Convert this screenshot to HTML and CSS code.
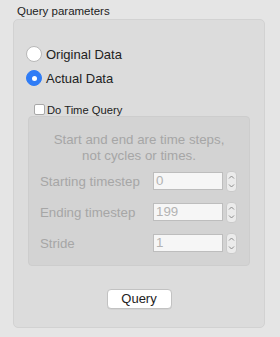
FILE: index.html
```html
<!DOCTYPE html>
<html>
<head>
<meta charset="utf-8">
<link rel="stylesheet" href="styles.css">
</head>
<body>
<div class="title">Query parameters</div>
<div class="group">
  <div class="radio-row first"><span class="radio"></span><span class="rlabel">Original Data</span></div>
  <div class="radio-row second"><span class="radio on"></span><span class="rlabel">Actual Data</span></div>
  <div class="check-row"><span class="check"></span><span class="clabel">Do Time Query</span></div>
  <div class="inner">
    <div class="desc">Start and end are time steps,<br>not cycles or times.</div>
    <div class="row"><span class="label">Starting timestep</span><span class="input">0</span><span class="stepper"><svg width="11" height="21" viewBox="0 0 11 21"><path d="M3 7.5 L5.5 5 L8 7.5 M3 13.5 L5.5 16 L8 13.5" fill="none" stroke="#8a8a8a" stroke-width="1"/></svg></span></div>
    <div class="row"><span class="label">Ending timestep</span><span class="input">199</span><span class="stepper"><svg width="11" height="21" viewBox="0 0 11 21"><path d="M3 7.5 L5.5 5 L8 7.5 M3 13.5 L5.5 16 L8 13.5" fill="none" stroke="#8a8a8a" stroke-width="1"/></svg></span></div>
    <div class="row"><span class="label">Stride</span><span class="input">1</span><span class="stepper"><svg width="11" height="21" viewBox="0 0 11 21"><path d="M3 7.5 L5.5 5 L8 7.5 M3 13.5 L5.5 16 L8 13.5" fill="none" stroke="#8a8a8a" stroke-width="1"/></svg></span></div>
  </div>
  <div class="btn-row"><span class="button">Query</span></div>
</div>
</body>
</html>
```

FILE: styles.css
```css
html, body {
  margin: 0;
  padding: 0;
  background: #e5e5e5;
  font-family: "Liberation Sans", Arial, sans-serif;
  color: #222;
  width: 280px;
  height: 337px;
  overflow: hidden;
}
.title {
  font-size: 11.5px;
  line-height: 14px;
  padding: 4px 0 0 17px;
  height: 15px;
}
.group {
  box-sizing: border-box;
  margin-left: 13px;
  width: 252px;
  height: 309px;
  background: #dcdcdc;
  border: 1px solid #d2d2d2;
  border-radius: 5px;
  padding-top: 26px;
}
.radio-row {
  display: flex;
  align-items: center;
  height: 16px;
  margin-left: 12px;
}
.radio-row.second { margin-top: 8px; }
.radio {
  box-sizing: border-box;
  width: 16px;
  height: 16px;
  border-radius: 50%;
  background: #fff;
  border: 1px solid #b8b8b8;
  position: relative;
  flex: none;
}
.radio.on {
  background: #2f7cf6;
  border-color: #2f7cf6;
}
.radio.on::after {
  content: "";
  position: absolute;
  left: 4.5px;
  top: 4.5px;
  width: 5px;
  height: 5px;
  border-radius: 50%;
  background: #fff;
}
.rlabel {
  font-size: 13px;
  margin-left: 4px;
}
.check-row {
  display: flex;
  align-items: center;
  height: 13px;
  margin-top: 17px;
  margin-left: 20px;
}
.check {
  box-sizing: border-box;
  width: 11px;
  height: 11px;
  background: #fff;
  border: 1px solid #a8a8a8;
  border-radius: 2px;
  flex: none;
}
.clabel {
  font-size: 11.2px;
  margin-left: 2px;
}
.inner {
  box-sizing: border-box;
  margin-left: 14px;
  width: 222px;
  height: 150px;
  background: #d3d3d3;
  border-radius: 4px;
  border: 1px solid #cdcdcd;
  padding-top: 15px;
}
.desc {
  text-align: center;
  font-size: 13.3px;
  line-height: 16px;
  color: #a6a6a6;
  margin-bottom: 6px;
}
.row {
  display: flex;
  align-items: center;
  height: 22px;
  margin-bottom: 9px;
  padding-left: 11px;
}
.label {
  width: 113px;
  font-size: 13.3px;
  color: #a6a6a6;
  flex: none;
}
.input {
  box-sizing: border-box;
  width: 70px;
  height: 18px;
  background: #f6f6f6;
  border: 1px solid #bdbdbd;
  font-size: 13.3px;
  line-height: 16px;
  padding-left: 2px;
  color: #b3b3b3;
  flex: none;
}
.stepper {
  box-sizing: border-box;
  margin-left: 3px;
  width: 11px;
  height: 21px;
  background: #ebebeb;
  border: 1px solid #cacaca;
  border-radius: 4px;
  display: flex;
  align-items: center;
  justify-content: center;
  overflow: hidden;
  flex: none;
}
.stepper svg { display: block; flex: none; }
.btn-row {
  display: flex;
  justify-content: center;
  margin-top: 23px;
}
.button {
  box-sizing: border-box;
  width: 65px;
  height: 20px;
  background: #fff;
  border: 1px solid #c2c2c2;
  border-radius: 4px;
  font-size: 13px;
  line-height: 18px;
  text-align: center;
  color: #222;
  box-shadow: 0 0.5px 0.5px rgba(0,0,0,0.08);
}
```
